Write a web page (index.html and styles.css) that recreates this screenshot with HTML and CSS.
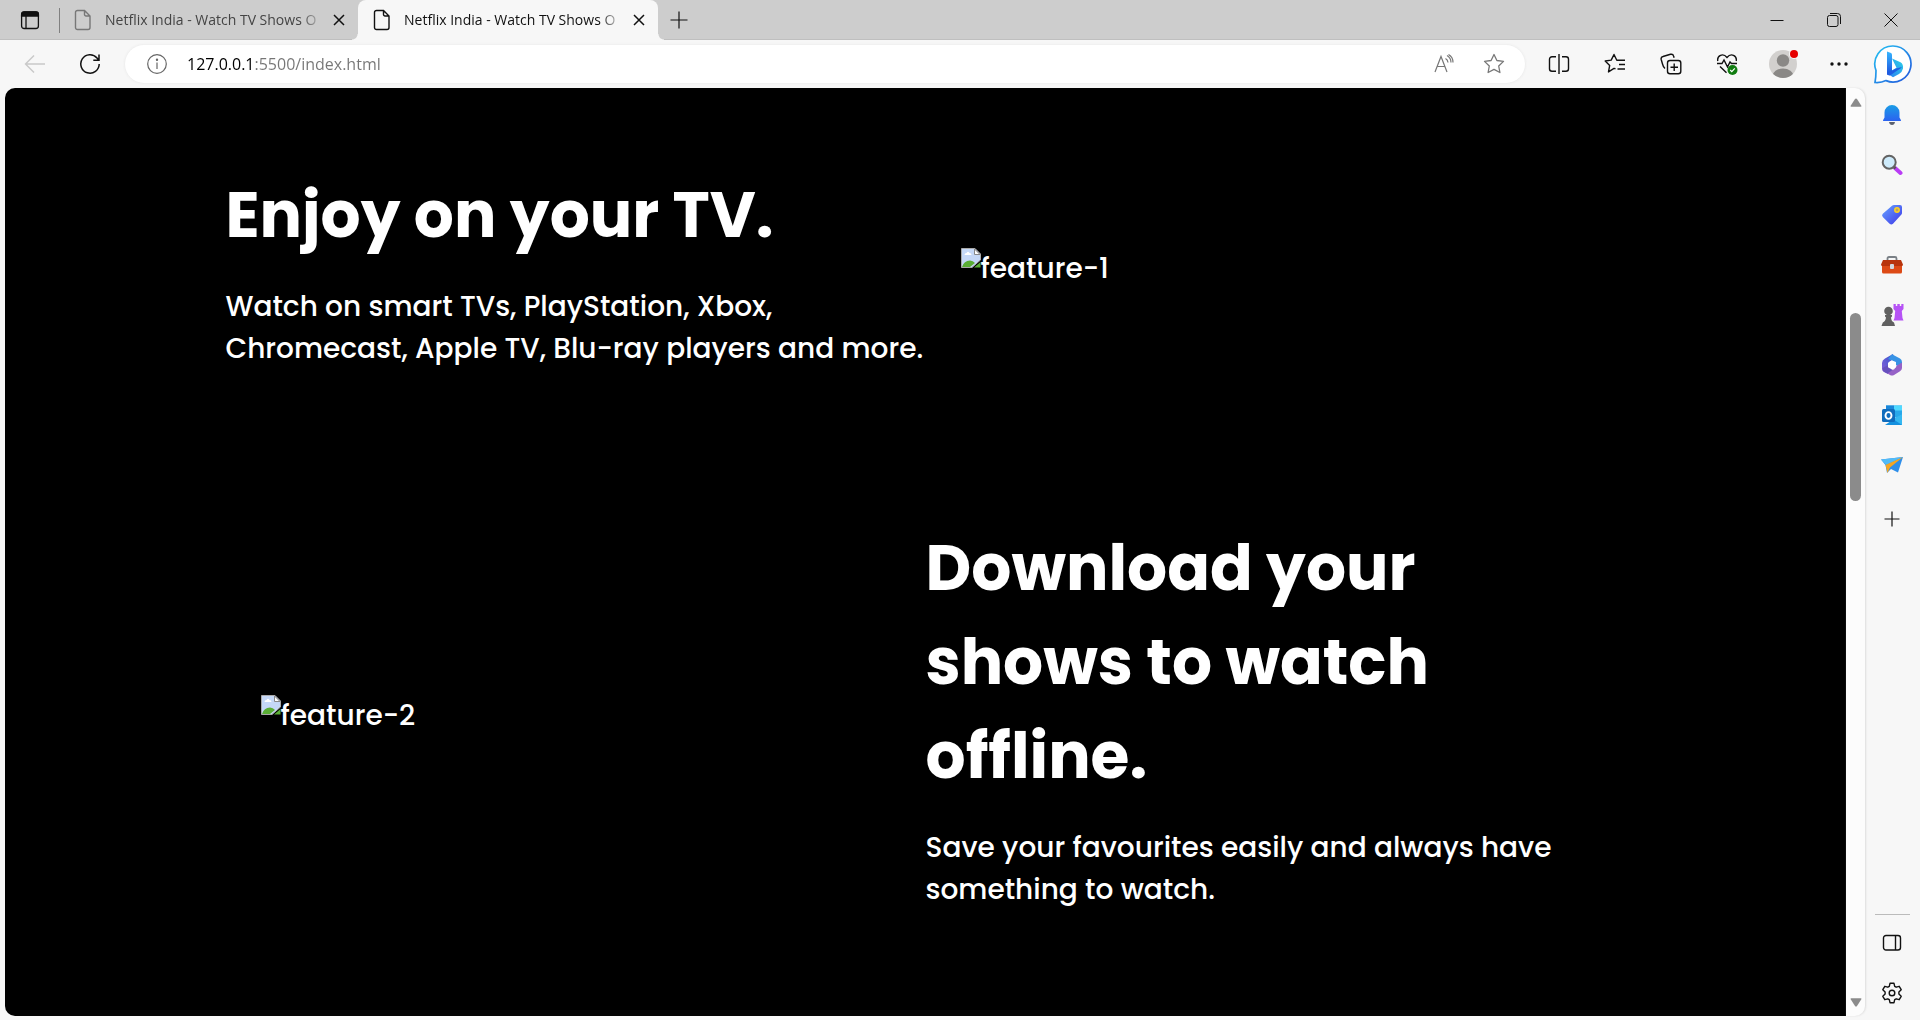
FILE: index.html
```html
<!DOCTYPE html>
<html lang="en">
<head>
<meta charset="utf-8">
<title>Netflix India - Watch TV Shows Online</title>
<link rel="stylesheet" href="styles.css">
</head>
<body>
<header class="tabstrip">
  <button class="btn tab-actions" aria-label="Tab actions"><svg width="20" height="20" viewBox="0 0 20 20" fill="none" stroke="#111" stroke-width="1.3"><rect x="1.6" y="2" width="16.8" height="16.5" rx="2.5"/><path d="M1.6 6V4.5A2.5 2.5 0 0 1 4.1 2h11.8a2.5 2.5 0 0 1 2.5 2.5V6z" fill="#111"/><path d="M6 6v12.500"/></svg></button>
  <span class="separator"></span>
  <div class="tab">
    <svg class="file" width="18" height="22" viewBox="0 0 18 22" fill="none" stroke="#777" stroke-width="1.4"><path d="M3.500 1.500h7l5.500 5.500v11.500a2 2 0 0 1-2 2H3.500a2 2 0 0 1-2-2v-15a2 2 0 0 1 2-2zM10.500 1.500V5.500a1.500 1.500 0 0 0 1.500 1.500h4"/></svg>
    <span class="tab-title">Netflix India - Watch TV Shows O</span>
    <button class="btn tab-close" aria-label="Close tab"><svg width="12" height="12" viewBox="0 0 12 12" stroke="#111" stroke-width="1.5"><path d="M1 1l10 10M11 1L1 11"/></svg></button>
  </div>
  <div class="tab active">
    <svg class="file" width="18" height="22" viewBox="0 0 18 22" fill="none" stroke="#111" stroke-width="1.4"><path d="M3.500 1.500h7l5.500 5.500v11.500a2 2 0 0 1-2 2H3.500a2 2 0 0 1-2-2v-15a2 2 0 0 1 2-2zM10.500 1.500V5.500a1.500 1.500 0 0 0 1.500 1.500h4"/></svg>
    <span class="tab-title">Netflix India - Watch TV Shows O</span>
    <button class="btn tab-close" aria-label="Close tab"><svg width="12" height="12" viewBox="0 0 12 12" stroke="#111" stroke-width="1.5"><path d="M1 1l10 10M11 1L1 11"/></svg></button>
  </div>
  <button class="btn new-tab" aria-label="New tab"><svg width="18" height="18" viewBox="0 0 18 18" stroke="#111" stroke-width="1.2"><path d="M9 .5v17M.5 9h17"/></svg></button>
  <div class="window-controls">
    <button class="btn" aria-label="Minimize"><svg width="14" height="14" viewBox="0 0 14 14" stroke="#111"><path d="M.5 7.500h13"/></svg></button>
    <button class="btn" aria-label="Restore"><svg width="14" height="14" viewBox="0 0 14 14" fill="none" stroke="#111"><rect x=".5" y="2.500" width="10.500" height="11" rx="2"/><path d="M3 .5h7.500a3 3 0 0 1 3 3V11"/></svg></button>
    <button class="btn" aria-label="Close"><svg width="14" height="14" viewBox="0 0 14 14" stroke="#111"><path d="M.5.5l13 13M13.500.5l-13 13"/></svg></button>
  </div>
</header>

<div class="toolbar">
  <button class="btn nav" aria-label="Back"><svg width="22" height="20" viewBox="0 0 22 20" fill="none" stroke="#c9c9c9" stroke-width="1.4"><path d="M21 10H1.500M10 1.500L1.500 10l8.500 8.500"/></svg></button>
  <button class="btn nav" aria-label="Refresh"><svg width="22" height="22" viewBox="0 0 22 22" fill="none" stroke="#111" stroke-width="1.5"><path d="M20.200 11a9.200 9.200 0 1 1-2.200-6l1.500 1.700M20 1.500v5.700h-5.700"/></svg></button>
  <div class="address">
    <button class="btn info" aria-label="Site information"><svg width="22" height="22" viewBox="0 0 22 22" fill="none" stroke="#666" stroke-width="1.2"><circle cx="11" cy="11" r="9.300"/><path d="M11 9.500v6.500"/><circle cx="11" cy="6.700" r=".6" fill="#666"/></svg></button>
    <input class="url" type="text" aria-label="Address" value="127.0.0.1:5500/index.html">
    <button class="btn" aria-label="Read aloud"><svg width="22" height="22" viewBox="0 0 22 22" fill="none" stroke="#777" stroke-width="1.2"><path d="M2 19L8 3.500 14 19M4 13.500h8"/><path d="M12.500 5.500a5 5 0 0 1 2.500 4M14 2.500a8 8 0 0 1 4 7M15.500 1.500a9 9 0 0 1 4.500 8"/></svg></button>
    <button class="btn" aria-label="Add to favorites"><svg width="22" height="22" viewBox="0 0 22 22" fill="none" stroke="#777" stroke-width="1.300" stroke-linejoin="round"><path d="M11 1.500l2.900 6 6.600.9-4.800 4.600 1.200 6.500-5.900-3.100-5.900 3.100 1.200-6.500L1.500 8.400l6.600-.9z"/></svg></button>
  </div>
  <button class="btn tool" aria-label="Split screen"><svg width="22" height="22" viewBox="0 0 22 22" fill="none" stroke="#111" stroke-width="1.400"><path d="M8 3.700H4a2.500 2.500 0 0 0-2.500 2.500v9.600A2.500 2.500 0 0 0 4 18.300h4M14 3.700h4a2.500 2.500 0 0 1 2.500 2.500v9.600a2.500 2.500 0 0 1-2.500 2.500h-4M11 1v20"/></svg></button>
  <button class="btn tool" aria-label="Favorites"><svg width="22" height="22" viewBox="0 0 22 22" fill="none" stroke="#111" stroke-width="1.400" stroke-linejoin="round"><path d="M11.500 15.800L10 15.400l-5.500 3.500 1.200-6.500L1.200 8l6-.9L10 1.500 12.800 7.200H21M15 11.500h6M13.500 16h7.500"/></svg></button>
  <button class="btn tool" aria-label="Collections"><svg width="22" height="22" viewBox="0 0 22 22" fill="none" stroke="#111" stroke-width="1.400"><rect x="7.500" y="7.500" width="13.300" height="13.300" rx="2.500"/><path d="M14.200 10.500v7.500M10.500 14.200H18M5 15.500C3.500 14.500 3 13 2.500 11L1.200 6.500C.8 4.900 1.400 3.900 3 3.500L10.500 1.300c1.700-.4 2.700.2 3.100 1.700l.5 1.700"/></svg></button>
  <button class="btn tool" aria-label="Browser essentials"><svg width="22" height="22" viewBox="0 0 22 22" fill="none" stroke="#111" stroke-width="1.400"><path d="M1.800 8C.8 2.500 7-.5 11 4.500 15-.5 21.200 2.500 20.200 8M1 10.500h5l2-3.500 3.500 7 2.500-5 1.500 1.500H21M4 13.500l6.500 6.300"/><circle cx="16.500" cy="17" r="5" fill="#107c10" stroke="none"/><path d="M14.200 17l1.600 1.600 3-3.200" stroke="#fff" stroke-width="1.200"/></svg></button>
  <button class="btn tool" aria-label="Profile"><svg width="30" height="30" viewBox="0 0 30 30"><defs><clipPath id="face"><circle cx="15" cy="15" r="14"/></clipPath></defs><circle cx="15" cy="15" r="14" fill="#d2d0ce"/><g fill="#8a8886" clip-path="url(#face)"><circle cx="15" cy="11.500" r="6.200"/><ellipse cx="15" cy="27" rx="10.500" ry="7.500"/></g><circle cx="26" cy="5" r="5" fill="#f7f7f7"/><circle cx="26" cy="5" r="4" fill="#e60000"/></svg></button>
  <button class="btn tool" aria-label="Settings and more"><svg width="18" height="4" viewBox="0 0 18 4" fill="#111"><circle cx="2" cy="2" r="1.700"/><circle cx="9" cy="2" r="1.700"/><circle cx="16" cy="2" r="1.700"/></svg></button>
  <button class="btn bing" aria-label="Bing chat"><svg width="40" height="40" viewBox="0 0 40 40"><defs><linearGradient id="ring" x1="0" y1="0" x2="1" y2="1"><stop stop-color="#25c3f2"/><stop offset="1" stop-color="#2355dc"/></linearGradient><linearGradient id="stem" x1="0" y1="0" x2="0" y2="1"><stop stop-color="#37b7ff"/><stop offset="1" stop-color="#1b4fdc"/></linearGradient><linearGradient id="bowl" x1="1" y1="0" x2="0" y2="1"><stop stop-color="#2cd3e8"/><stop offset="1" stop-color="#2b7cf0"/></linearGradient></defs><path d="M20 2a18 18 0 1 1-7 34.600Q8 39 2 38.500 3 33 3 26.500A18 18 0 0 1 20 2z" fill="#fff" stroke="url(#ring)" stroke-width="1.700"/><path d="M19 14.500l8.500 3.700q3 1.800 2.500 6.300-.7 3.500-4 5.500l-6 3.300-6-4 9.500-5.600z" fill="url(#bowl)"/><path d="M14 7.500l4 1.500q1 .5 1 1.600v17.900l-5 2.500z" fill="url(#stem)"/><path d="M14 29.500l9-5 6-1.500q-1.500 1.800-4 3l-8 5.500q-2 .5-3-2z" fill="#205ee2"/></svg></button>
</div>

<div class="workspace">
  <main class="page">
    <section class="feature">
      <div class="feature-text">
        <h2>Enjoy on your TV.</h2>
        <p>Watch on smart TVs, PlayStation, Xbox,<br>Chromecast, Apple TV, Blu-ray players and more.</p>
      </div>
      <div class="feature-image">
        <svg width="20" height="20" viewBox="0 0 20 20"><path d="M.5.500h13.500l5.500 5.500v6L11 19.500H.5z" fill="#c5d8f7" stroke="#a9a9a9"/><path d="M13.500 1v5.500H19z" fill="#fff" stroke="#888"/><path d="M3.500 7q0-2 2-2 1.500-2.500 3 0 2 0 2 2z" fill="#fff"/><path d="M1 19q2-6.500 8-6.500 3 0 5 2.500L9 19zM13 19.500l6.500-5.500v5.500z" fill="#5aae35"/></svg><span>feature-1</span>
      </div>
    </section>
    <section class="feature">
      <div class="feature-image">
        <svg width="20" height="20" viewBox="0 0 20 20"><path d="M.5.500h13.500l5.500 5.500v6L11 19.500H.5z" fill="#c5d8f7" stroke="#a9a9a9"/><path d="M13.500 1v5.500H19z" fill="#fff" stroke="#888"/><path d="M3.500 7q0-2 2-2 1.500-2.500 3 0 2 0 2 2z" fill="#fff"/><path d="M1 19q2-6.500 8-6.500 3 0 5 2.500L9 19zM13 19.500l6.500-5.500v5.500z" fill="#5aae35"/></svg><span>feature-2</span>
      </div>
      <div class="feature-text">
        <h2>Download your<br>shows to watch<br>offline.</h2>
        <p>Save your favourites easily and always have<br>something to watch.</p>
      </div>
    </section>
  </main>
  <div class="scrollbar">
    <svg width="12" height="9" viewBox="0 0 12 9" fill="#8b8b8b"><path d="M6 .5q.6 0 1 .6L11.500 8q0 .8-.8.800H1.300Q.5 8.800.5 8L5 1.100q.4-.6 1-.6z"/></svg>
    <div class="track"><div class="thumb"></div></div>
    <svg width="12" height="9" viewBox="0 0 12 9" fill="#8b8b8b"><path d="M6 8.500q.6 0 1-.6L11.500 1q0-.8-.8-.800H1.300Q.5.2.5 1L5 7.900q.4.6 1 .6z"/></svg>
  </div>
  <aside class="sidebar">
    <button class="btn side" aria-label="Notifications"><svg width="22" height="22" viewBox="0 0 22 22"><defs><linearGradient id="bell" x1="0" y1="0" x2="0" y2="1"><stop stop-color="#1a9de6"/><stop offset="1" stop-color="#2b62f0"/></linearGradient></defs><path d="M11 1a7.500 7.500 0 0 0-7.500 7.500v5L2 16.200q-.2.800.5.800h17q.7 0 .5-.8l-1.500-2.700v-5A7.500 7.500 0 0 0 11 1z" fill="url(#bell)"/><path d="M8 18h6q-.5 3-3 3t-3-3z" fill="#5c6270"/></svg></button>
    <button class="btn side" aria-label="Search"><svg width="22" height="22" viewBox="0 0 22 22"><path d="M14 14l5.500 5" stroke="#b93cf5" stroke-width="4" stroke-linecap="round"/><path d="M12.500 12.500l2 2" stroke="#555" stroke-width="2.500"/><circle cx="8.200" cy="8.200" r="6.500" fill="#cdeafa" stroke="#636363" stroke-width="2"/></svg></button>
    <button class="btn side" aria-label="Shopping"><svg width="22" height="22" viewBox="0 0 22 22"><defs><linearGradient id="tag" x1="0" y1="0" x2="1" y2="1"><stop stop-color="#67a5ff"/><stop offset="1" stop-color="#3d35e8"/></linearGradient></defs><path d="M13 1h6q2 0 2 2v6q0 1-.8 1.800L12 19.800q-1.700 1.500-3.400 0L1.800 13q-1.500-1.600 0-3.200L11 1.800q.8-.8 2-.8z" fill="url(#tag)"/><circle cx="16" cy="6" r="2.200" fill="#b9a26a" stroke="#ffd21f" stroke-width="1.500"/></svg></button>
    <button class="btn side" aria-label="Tools"><svg width="24" height="20" viewBox="0 0 24 20"><path d="M7.500 5V3.500q0-1.500 1.500-1.500h6q1.500 0 1.500 1.500V5" fill="none" stroke="#7a8086" stroke-width="1.800"/><rect x="2" y="9" width="20" height="9.500" rx="1.500" fill="#dd4a16"/><path d="M3 5h18l2 4.500q0 1.500-1.500 1.500h-19Q1 11 1 9.500z" fill="#b8340c"/><rect x="10" y="9" width="4" height="5" rx="1" fill="#d3d9de"/></svg></button>
    <button class="btn side" aria-label="Games"><svg width="24" height="24" viewBox="0 0 24 24"><path d="M13.500 1h2.300v2h1.500V1h2.500v2h1.500V1H23.500v5l-1.700 2 .7 7 1 2.500H13.500l1-2.500.7-7-1.700-2z" fill="#b653f5"/><g fill="#606060"><circle cx="8.500" cy="8" r="4.300"/><path d="M5 12h7v1.500l-1 1q.3 4 3 5l1 3.500H1.500l1.300-3.500q2.700-1 3.200-5l-1-1z"/></g></svg></button>
    <button class="btn side" aria-label="Microsoft 365"><svg width="22" height="24" viewBox="0 0 22 24"><defs><linearGradient id="m1" x1="0" y1="1" x2="1" y2="0"><stop stop-color="#8a5fd8"/><stop offset="1" stop-color="#3155cf"/></linearGradient></defs><path d="M12 1L4 5.400Q1 7 1 10v6q0 2 2 3l4 2 1-7V9l5-3.500z" fill="url(#m1)"/><path d="M11 1.200l8 4.300q2 1.300 2 3.800v5l-6-2V9L7 6z" fill="#3893e5"/><path d="M21 9.500V15q0 2-2 3.300l-6 3.600q-2 1.100-4 0L3 18.500l10-2 3-4z" fill="#9662c7"/><path d="M1.500 15l6-3 4 5-5 3.500-3-1.500q-2-1-2-4z" fill="#6750bd"/><path d="M11 7.500l4 2.300v4.500L11 16.500l-4-2.200V9.800z" fill="#fff"/></svg></button>
    <button class="btn side" aria-label="Outlook"><svg width="22" height="22" viewBox="0 0 22 22"><path d="M5 1.500h16v12H5z" fill="#28a8ea"/><path d="M5 1.500h8v5H5z" fill="#1a86d9"/><path d="M13 1.500h8v5h-8z" fill="#50d9ff"/><path d="M4 21h17V10l-8 5z" fill="#1490df"/><path d="M12 15l9-5v11z" fill="#35b8f1"/><rect x="1" y="5" width="13" height="13" rx="1.500" fill="#0f6cbd"/><ellipse cx="7.500" cy="11.500" rx="3" ry="3.400" fill="none" stroke="#fff" stroke-width="1.900"/></svg></button>
    <button class="btn side" aria-label="Drop"><svg width="24" height="20" viewBox="0 0 24 20"><path d="M1 4.500L23 2l-5 15.500-7-3.500-4 4-1.500-8z" fill="#2e8eea"/><path d="M1 4.500L23 2 6 10z" fill="#52bbf7"/><path d="M5.500 10L23 2 10 12.500 7.500 18z" fill="#f5a623"/></svg></button>
    <button class="btn side add" aria-label="Customize"><svg width="16" height="16" viewBox="0 0 16 16" stroke="#111" stroke-width="1.200"><path d="M8 .5v15M.5 8h15"/></svg></button>
    <div class="side-bottom">
      <button class="btn side" aria-label="Hide sidebar"><svg width="20" height="18" viewBox="0 0 20 18" fill="none" stroke="#111" stroke-width="1.400"><rect x="1.500" y="1.500" width="17" height="14.500" rx="2.500"/><path d="M13.500 1.500V16"/></svg></button>
      <button class="btn side" aria-label="Settings"><svg width="22" height="22" viewBox="0 0 22 22" fill="none" stroke="#111" stroke-width="1.400" stroke-linejoin="round"><path d="M9 1.300h4l.7 3 1.500.9 3-.9 2 3.400-2.300 2.200v2.200l2.300 2.200-2 3.400-3-.9-1.500.9-.7 3H9l-.7-3-1.500-.9-3 .9-2-3.400 2.300-2.200V9.900L1.800 7.700l2-3.400 3 .9 1.500-.9z"/><circle cx="11" cy="11" r="2.800"/></svg></button>
    </div>
  </aside>
</div>
</body>
</html>
```
FILE: styles.css
```css
* { box-sizing: border-box; }

body {
  margin: 0;
  min-height: 100vh;
  display: flex;
  flex-direction: column;
  background: #f7f7f7;
  color: #111;
  font-family: "Open Sans", "Noto Sans", sans-serif;
}

.btn {
  display: flex;
  align-items: center;
  justify-content: center;
  flex: none;
  padding: 0;
  border: 0;
  background: none;
}

/* Tab strip */
.tabstrip {
  display: flex;
  align-items: center;
  height: 40px;
  background: #cdcdcd;
  box-shadow: inset 0 -1px #bfbfbf;
}
.tab-actions { width: 59px; height: 40px; }
.separator { width: 1px; height: 25px; background: #808080; }
.tab {
  position: relative;
  display: flex;
  align-items: center;
  width: 298px;
  height: 40px;
  padding: 0 3px 0 14px;
  color: #444;
}
.file { flex: none; }
.tab-title {
  flex: 1;
  margin-left: 13px;
  white-space: nowrap;
  font-size: 14px;
  line-height: 20px;
  -webkit-mask-image: linear-gradient(90deg, #000 196px, transparent 218px);
  mask-image: linear-gradient(90deg, #000 196px, transparent 218px);
}
.tab-close { width: 32px; height: 32px; }
.tab.active {
  width: 300px;
  padding-left: 15px;
  background: #f7f7f7;
  color: #111;
  border-radius: 8px 8px 0 0;
}
.tab.active::before,
.tab.active::after {
  content: "";
  position: absolute;
  bottom: 0;
  width: 6px;
  height: 6px;
}
.tab.active::before { left: -6px; background: radial-gradient(circle at 0 0, #cdcdcd 5px, #f7f7f7 6px); }
.tab.active::after { right: -6px; background: radial-gradient(circle at 100% 0, #cdcdcd 5px, #f7f7f7 6px); }
.new-tab { width: 42px; height: 40px; }
.window-controls { display: flex; margin-left: auto; padding-right: 1px; }
.window-controls .btn { width: 57px; height: 40px; }

/* Toolbar */
.toolbar {
  display: flex;
  align-items: center;
  height: 48px;
  padding: 0 1px 0 7px;
}
.nav { width: 55px; height: 38px; }
.address {
  display: flex;
  align-items: center;
  flex: 1;
  height: 38px;
  margin: 0 6px 0 8px;
  padding: 0 6px 0 14px;
  border-radius: 19px;
  background: #fff;
  box-shadow: 0 0 3px #e4e4e4;
}
.address .btn { width: 50px; height: 38px; }
.address .info { width: 36px; }
.url {
  flex: 1;
  min-width: 0;
  margin-left: 12px;
  padding: 0;
  border: 0;
  outline: 0;
  font: 16px/24px "Open Sans", "Noto Sans", sans-serif;
  background: linear-gradient(90deg, #000 67px, #767676 67px);
  -webkit-background-clip: text;
  background-clip: text;
  -webkit-text-fill-color: transparent;
}
.tool { width: 56px; height: 38px; }
.bing { width: 52px; height: 48px; }

/* Page viewport, scrollbar and sidebar */
.workspace {
  display: flex;
  flex: 1;
  padding-left: 5px;
}
.page {
  flex: 1;
  margin-bottom: 4px;
  padding: 5px 0 29px;
  border-radius: 10px 0 0 10px;
  background: #000;
  color: #fff;
  font-family: Poppins, Inter, sans-serif;
}
.feature {
  display: grid;
  grid-template-columns: 1fr 1fr;
  align-items: center;
  max-width: 1400px;
  margin: 0 auto;
  padding: 75px 0 76px;
}
.feature h2 {
  margin: 0 0 24px;
  font-size: 63px;
  line-height: 94px;
  font-weight: 700;
}
.feature p {
  margin: 0;
  font-size: 28px;
  line-height: 42px;
  font-weight: 500;
  white-space: nowrap;
}
.feature-image {
  display: flex;
  align-items: flex-start;
  padding-left: 35px;
  font-size: 28px;
  line-height: 42px;
  font-weight: 500;
}
.scrollbar {
  display: flex;
  flex-direction: column;
  align-items: center;
  width: 19px;
  margin-bottom: 4px;
  padding: 10px 0 9px;
  border-radius: 0 10px 10px 0;
  background: #fcfcfc;
  box-shadow: 1px 0 2px #ddd;
}
.track { flex: 1; padding-top: 206px; }
.thumb {
  width: 11px;
  height: 188px;
  border-radius: 6px;
  background: #8b8b8b;
}
.sidebar {
  display: flex;
  flex-direction: column;
  align-items: center;
  width: 55px;
  padding: 2px 1px 2px 0;
}
.side { width: 50px; height: 50px; }
.add { margin-top: 4px; }
.side-bottom {
  display: flex;
  flex-direction: column;
  align-items: center;
  width: 35px;
  margin-top: auto;
  padding-top: 3px;
  border-top: 1px solid #bbb;
}
```
